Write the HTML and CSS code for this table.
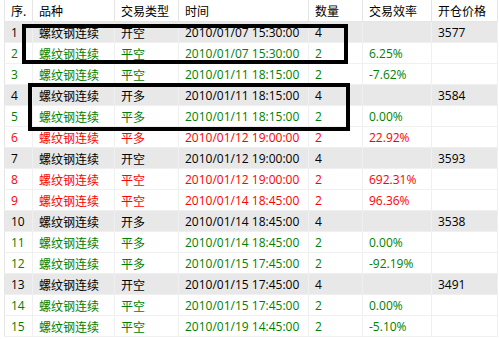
FILE: index.html
```html
<!DOCTYPE html>
<html>
<head>
<meta charset="utf-8">
<link rel="stylesheet" href="styles.css">
</head>
<body>
<div class="wrap">
<table class="grid">
<colgroup>
<col class="c0"><col class="c1"><col class="c2"><col class="c3"><col class="c4"><col class="c5"><col class="c6">
</colgroup>
<thead>
<tr><th>序.</th><th>品种</th><th>交易类型</th><th>时间</th><th>数量</th><th>交易效率</th><th>开仓价格</th></tr>
</thead>
<tbody>
<tr class="open"><td>1</td><td>螺纹钢连续</td><td>开空</td><td>2010/01/07 15:30:00</td><td>4</td><td></td><td>3577</td></tr>
<tr class="win"><td>2</td><td>螺纹钢连续</td><td>平空</td><td>2010/01/07 15:30:00</td><td>2</td><td>6.25%</td><td></td></tr>
<tr class="win"><td>3</td><td>螺纹钢连续</td><td>平空</td><td>2010/01/11 18:15:00</td><td>2</td><td>-7.62%</td><td></td></tr>
<tr class="open"><td>4</td><td>螺纹钢连续</td><td>开多</td><td>2010/01/11 18:15:00</td><td>4</td><td></td><td>3584</td></tr>
<tr class="win"><td>5</td><td>螺纹钢连续</td><td>平多</td><td>2010/01/11 18:15:00</td><td>2</td><td>0.00%</td><td></td></tr>
<tr class="loss"><td>6</td><td>螺纹钢连续</td><td>平多</td><td>2010/01/12 19:00:00</td><td>2</td><td>22.92%</td><td></td></tr>
<tr class="open"><td>7</td><td>螺纹钢连续</td><td>开空</td><td>2010/01/12 19:00:00</td><td>4</td><td></td><td>3593</td></tr>
<tr class="loss"><td>8</td><td>螺纹钢连续</td><td>平空</td><td>2010/01/12 19:00:00</td><td>2</td><td>692.31%</td><td></td></tr>
<tr class="loss"><td>9</td><td>螺纹钢连续</td><td>平空</td><td>2010/01/14 18:45:00</td><td>2</td><td>96.36%</td><td></td></tr>
<tr class="open"><td>10</td><td>螺纹钢连续</td><td>开多</td><td>2010/01/14 18:45:00</td><td>4</td><td></td><td>3538</td></tr>
<tr class="win"><td>11</td><td>螺纹钢连续</td><td>平多</td><td>2010/01/14 18:45:00</td><td>2</td><td>0.00%</td><td></td></tr>
<tr class="win"><td>12</td><td>螺纹钢连续</td><td>平多</td><td>2010/01/15 17:45:00</td><td>2</td><td>-92.19%</td><td></td></tr>
<tr class="open"><td>13</td><td>螺纹钢连续</td><td>开空</td><td>2010/01/15 17:45:00</td><td>4</td><td></td><td>3491</td></tr>
<tr class="win"><td>14</td><td>螺纹钢连续</td><td>平空</td><td>2010/01/15 17:45:00</td><td>2</td><td>0.00%</td><td></td></tr>
<tr class="win"><td>15</td><td>螺纹钢连续</td><td>平空</td><td>2010/01/19 14:45:00</td><td>2</td><td>-5.10%</td><td></td></tr>
</tbody>
</table>
<div class="mark mark1"></div>
<div class="mark mark2"></div>
</div>
</body>
</html>
```
FILE: styles.css
```css
html, body {
  margin: 0;
  padding: 0;
  background: #ffffff;
}
.wrap {
  position: relative;
  width: 499px;
  height: 339px;
  overflow: hidden;
  padding-left: 4px;
  box-sizing: border-box;
}
.grid {
  border-collapse: collapse;
  table-layout: fixed;
  width: 493px;
  font-family: "Open Sans", "Noto Sans CJK SC", sans-serif;
  font-size: 12px;
  color: #000;
}
.c0 { width: 28px; }
.c1 { width: 82px; }
.c2 { width: 64px; }
.c3 { width: 130px; }
.c4 { width: 54px; }
.c5 { width: 69px; }
.c6 { width: 66px; }
.grid th, .grid td {
  padding: 0 0 0 6px;
  text-align: left;
  font-weight: normal;
  white-space: nowrap;
  overflow: hidden;
  border-right: 1px solid #f0f0f0;
  border-bottom: 1px solid #f0f0f0;
}
.grid th {
  height: 21px;
  border-right: 1px solid #e5e5e5;
  border-bottom: 1px solid #e5e5e5;
  font-family: "Noto Sans CJK SC", sans-serif;
}
.grid th:first-child, .grid td:first-child {
  border-left: 1px solid #e5e5e5;
}
.grid td {
  height: 20px;
}
.grid td:nth-child(2), .grid td:nth-child(3) {
  font-family: "Noto Sans CJK SC", sans-serif;
}
.open td { background: #e8e8e8; color: #000; }
.win td { color: #008000; }
.loss td { color: #ff0000; }
.mark {
  position: absolute;
  border: 4px solid #000;
  box-sizing: border-box;
}
.mark1 {
  left: 22px;
  top: 24px;
  width: 326px;
  height: 40px;
}
.mark2 {
  left: 28px;
  top: 83px;
  width: 322px;
  height: 48px;
}
```
